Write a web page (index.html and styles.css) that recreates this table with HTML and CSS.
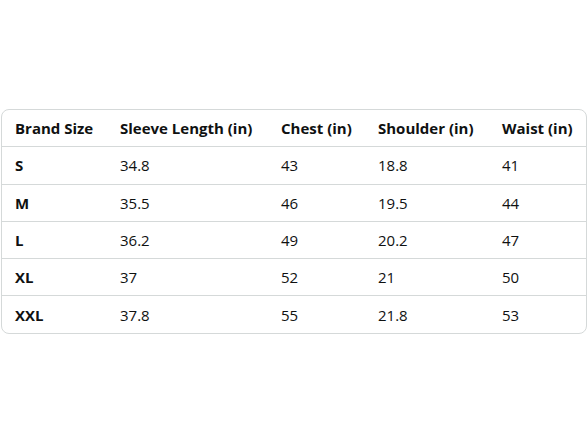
FILE: index.html
```html
<!DOCTYPE html>
<html>
<head>
<meta charset="utf-8">
<link rel="stylesheet" href="styles.css">
</head>
<body>
<div class="wrap">
<table class="sizes">
<colgroup>
<col class="c1"><col class="c2"><col class="c3"><col class="c4"><col class="c5">
</colgroup>
<thead>
<tr><th>Brand Size</th><th>Sleeve Length (in)</th><th>Chest (in)</th><th>Shoulder (in)</th><th>Waist (in)</th></tr>
</thead>
<tbody>
<tr><th>S</th><td>34.8</td><td>43</td><td>18.8</td><td>41</td></tr>
<tr><th>M</th><td>35.5</td><td>46</td><td>19.5</td><td>44</td></tr>
<tr><th>L</th><td>36.2</td><td>49</td><td>20.2</td><td>47</td></tr>
<tr><th>XL</th><td>37</td><td>52</td><td>21</td><td>50</td></tr>
<tr><th>XXL</th><td>37.8</td><td>55</td><td>21.8</td><td>53</td></tr>
</tbody>
</table>
</div>
</body>
</html>
```
FILE: styles.css
```css
html, body {
  margin: 0;
  padding: 0;
  background: #ffffff;
}
body {
  width: 588px;
  height: 441px;
  display: flex;
  align-items: center;
  justify-content: center;
  font-family: "Open Sans", "Noto Sans", sans-serif;
  color: #0f1111;
}
.wrap {
  width: 584px;
  margin-top: 2px;
  border: 1px solid #d5d9d9;
  border-radius: 8px;
  overflow: hidden;
}
.sizes {
  width: 100%;
  border-collapse: collapse;
  table-layout: fixed;
  font-size: 15px;
}
.c1 { width: 105px; }
.c2 { width: 161px; }
.c3 { width: 97px; }
.c4 { width: 124px; }
.c5 { width: 97px; }
.sizes th, .sizes td {
  text-align: left;
  padding: 0 0 0 13px;
  height: 36px;
  white-space: nowrap;
}
.sizes th { font-weight: 700; }
.sizes td { font-weight: 400; }
.sizes tbody tr th, .sizes tbody tr td {
  height: 36.3px;
  border-top: 1px solid #d5d9d9;
}
```
